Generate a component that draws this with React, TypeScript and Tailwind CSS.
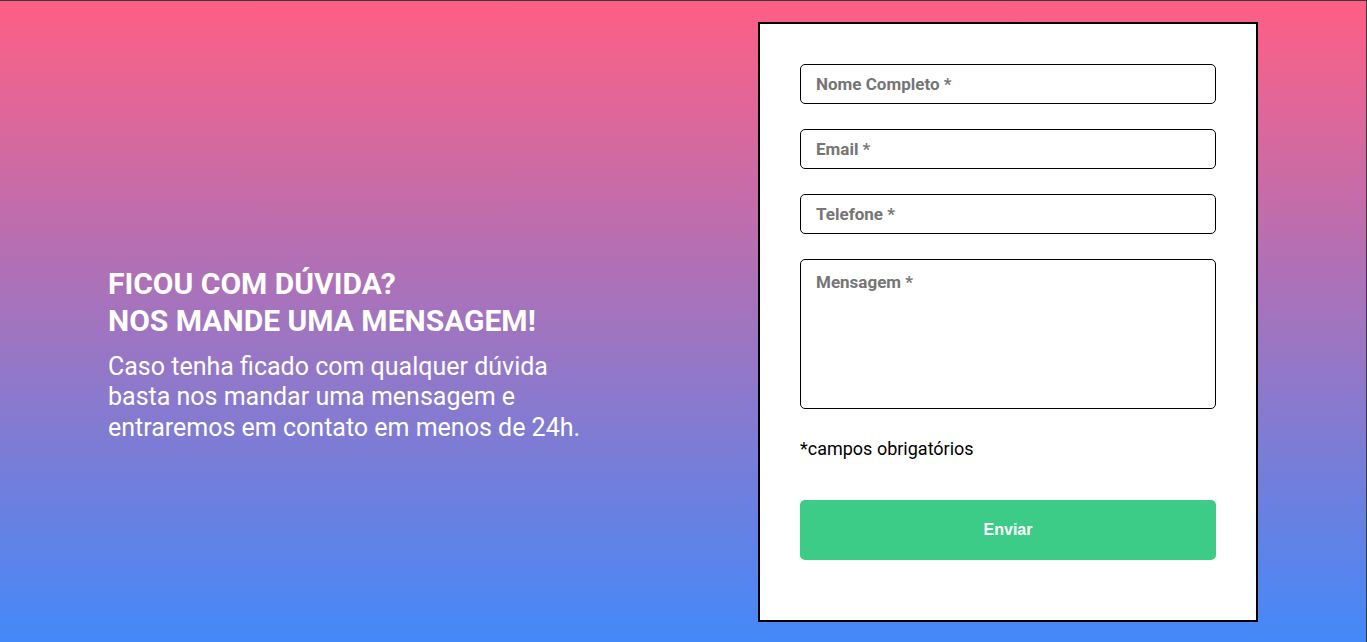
import React from "react";

export default function App() {
  const fields = ["Nome Completo *", "Email *", "Telefone *"];
  return (
    <div
      className="w-[1367px] h-[642px] border-t border-r border-[#3a3a3a] bg-[linear-gradient(180deg,#ff5f85_0%,#4389f9_100%)] overflow-hidden"
      style={{ fontFamily: "Roboto, 'Liberation Sans', sans-serif" }}
    >
      <div className="mx-auto w-[1150px] h-full flex items-center justify-between">
        <div className="text-white mt-[65px]">
          <h1 className="text-[30px] leading-[37px] font-bold">
            FICOU COM DÚVIDA?
            <br />
            NOS MANDE UMA MENSAGEM!
          </h1>
          <p className="text-[25px] leading-[30.5px] mt-[13px]">
            Caso tenha ficado com qualquer dúvida
            <br />
            basta nos mandar uma mensagem e
            <br />
            entraremos em contato em menos de 24h.
          </p>
        </div>
        <div className="w-[500px] h-[600px] bg-white border-2 border-black p-[40px] flex flex-col">
          <div className="flex flex-col gap-[25px]">
            {fields.map((f) => (
              <div
                key={f}
                className="h-[40px] border border-black rounded-[5px] px-[15px] pt-[3px] flex items-center text-[17px] font-bold text-[#757575]"
              >
                {f}
              </div>
            ))}
            <div className="h-[150px] border border-black rounded-[5px] px-[15px] pt-[10px] text-[17px] font-bold text-[#757575]">
              Mensagem *
            </div>
          </div>
          <p className="mt-[28px] text-[18px] leading-[24px] text-black">*campos obrigatórios</p>
          <button
            className="mt-[39px] h-[60px] w-full rounded-[5px] bg-[#3ccc88] text-white text-[16px] font-bold"
            style={{ fontFamily: "'Liberation Sans', Arial, sans-serif" }}
          >
            Enviar
          </button>
        </div>
      </div>
    </div>
  );
}
